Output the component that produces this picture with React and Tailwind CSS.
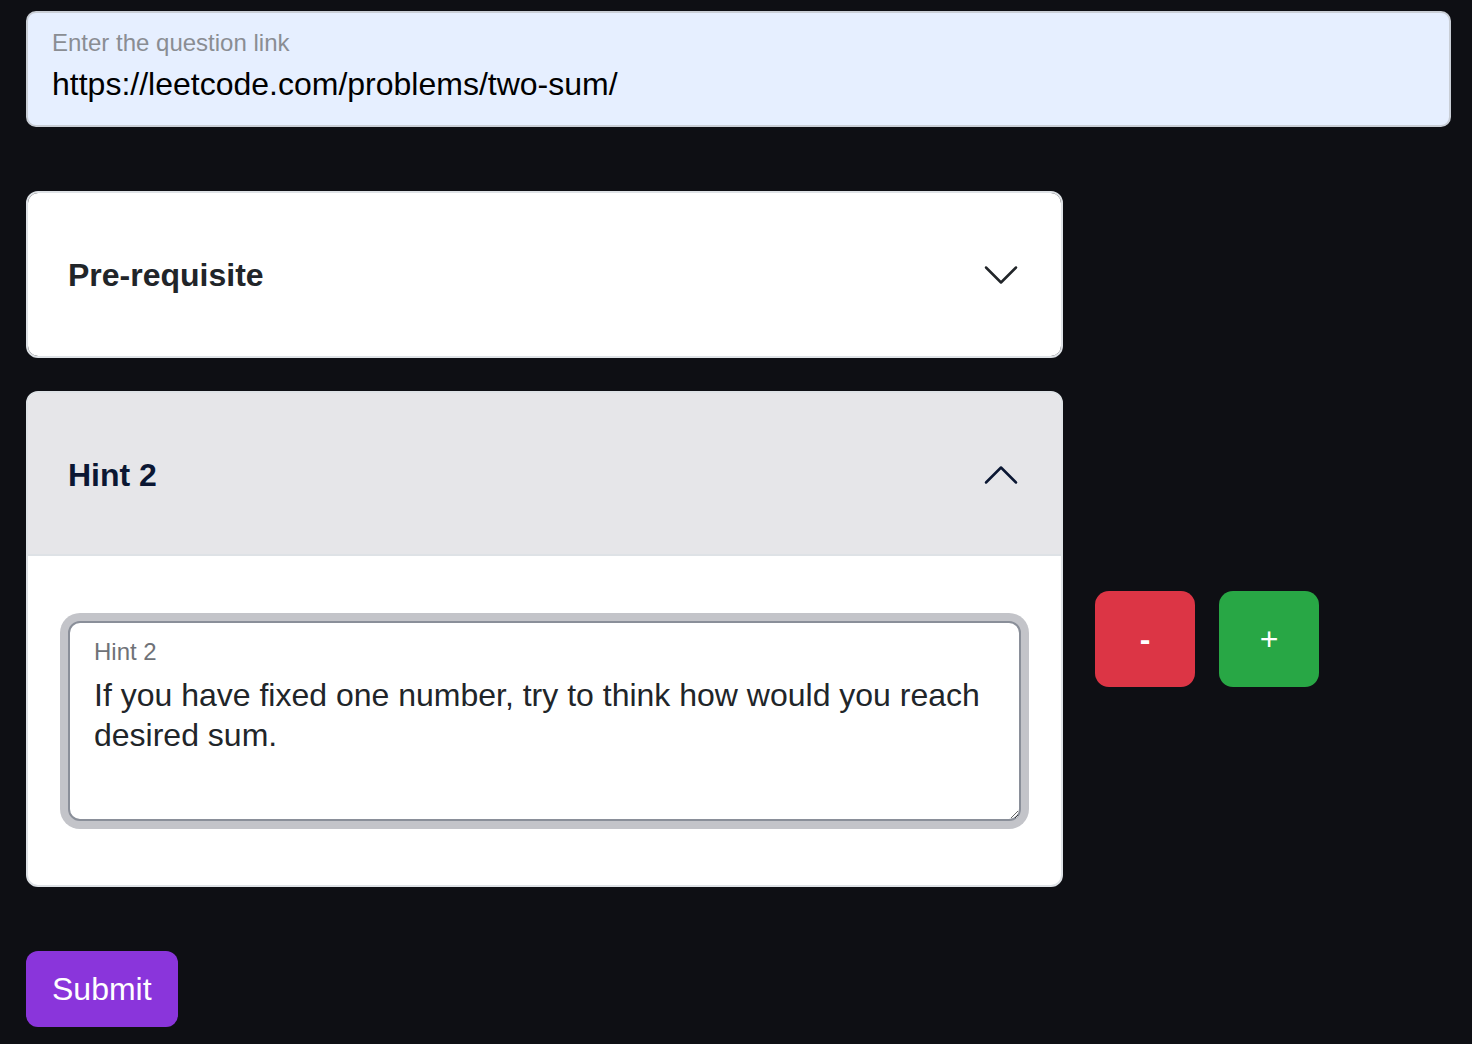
import { useState } from 'react'

const font = { fontFamily: '"Liberation Sans", Arial, Helvetica, sans-serif' }

function Chevron({ open }) {
  return (
    <svg
      viewBox="0 0 16 16"
      fill="none"
      stroke={open ? '#0b1733' : '#212529'}
      strokeWidth="1"
      strokeLinecap="round"
      strokeLinejoin="round"
      className={'w-[40px] h-[40px] shrink-0 ' + (open ? 'rotate-180' : '')}
    >
      <path d="M2 5L8 11L14 5" />
    </svg>
  )
}

function AccordionItem({ title, open, onToggle, children }) {
  return (
    <div className="rounded-[12px] border-2 border-[#dee2e6] bg-white overflow-hidden">
      <button
        type="button"
        onClick={onToggle}
        className={
          'w-full h-[163px] flex items-center justify-between px-[40px] text-left ' +
          (open ? 'bg-[#e6e6e9] text-[#0b1733] shadow-[inset_0_-2px_0_#dee2e6]' : 'bg-white text-[#212529]')
        }
      >
        <span className="text-[32px] leading-[40px] font-bold">{title}</span>
        <Chevron open={open} />
      </button>
      {open && <div className="px-[40px] pt-[33px] pb-[32px]">{children}</div>}
    </div>
  )
}

export default function App() {
  const [open, setOpen] = useState({ pre: false, hint: true })
  const [hint, setHint] = useState('If you have fixed one number, try to think how would you reach desired sum.')

  return (
    <div className="min-h-screen bg-[#0e0f14] pl-[26px] pr-[21px] pt-[11px] pb-[18px]" style={font}>
      {/* Question link */}
      <div className="h-[116px] rounded-[10px] border-2 border-[#c9ced6] bg-[#e6efff] px-[24px] pt-[17px]">
        <label className="block text-[24px] leading-[26px] text-[#8a8d93]">Enter the question link</label>
        <input
          className="mt-[8px] w-full bg-transparent outline-none text-[32px] leading-[40px] text-black"
          defaultValue="https://leetcode.com/problems/two-sum/"
        />
      </div>

      <div className="mt-[64px] flex items-start gap-[32px]">
        <div className="w-[1037px] flex flex-col gap-[33px]">
          <AccordionItem title="Pre-requisite" open={open.pre} onToggle={() => setOpen(o => ({ ...o, pre: !o.pre }))}>
            <div />
          </AccordionItem>

          <AccordionItem title="Hint 2" open={open.hint} onToggle={() => setOpen(o => ({ ...o, hint: !o.hint }))}>
            <div className="relative my-[32px]">
              <label className="absolute left-[26px] top-[17px] text-[24px] leading-[28px] text-[#6f7277] pointer-events-none">
                Hint 2
              </label>
              <textarea
                value={hint}
                onChange={e => setHint(e.target.value)}
                className="block w-full h-[200px] rounded-[12px] border-2 border-[#8a8f99] ring-8 ring-[#c3c4c9] bg-white px-[24px] pt-[52px] pb-[8px] text-[32px] leading-[40px] text-[#212529] outline-none"
              />
            </div>
          </AccordionItem>
        </div>

        <div className="mt-[400px] flex gap-[24px]">
          <button className="w-[100px] h-[96px] rounded-[14px] bg-[#dc3545] text-white text-[32px] leading-none font-semibold">-</button>
          <button className="w-[100px] h-[96px] rounded-[14px] bg-[#28a745] text-white text-[32px] leading-none">+</button>
        </div>
      </div>

      <button className="mt-[64px] h-[76px] px-[26px] rounded-[12px] bg-[#8a35db] text-white text-[32px] leading-[48px]">
        Submit
      </button>
    </div>
  )
}
